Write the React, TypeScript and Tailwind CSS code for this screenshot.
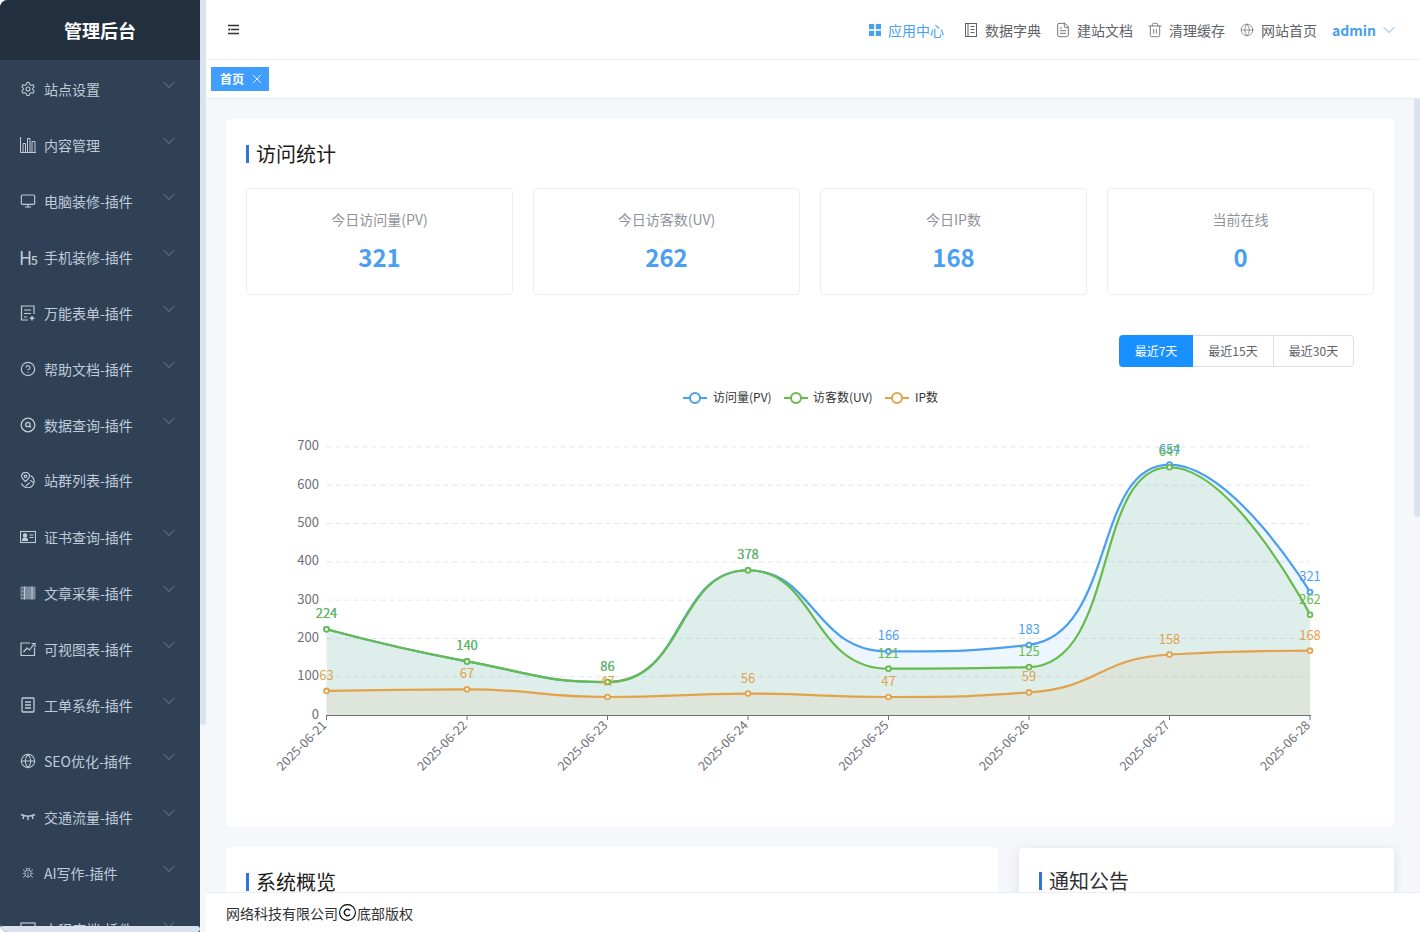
import React from "react";
import {
  Settings,
  Monitor,
  CircleHelp,
  ChevronDown,
  X,
  Copyright,
  Trash2,
  Globe,
  FileText,
  Bug,
} from "lucide-react";

type IconProps = { className?: string };

const BarsIcon = ({ className }: IconProps) => (
  <svg viewBox="0 0 16 16" fill="none" stroke="currentColor" strokeWidth="1" className={className}>
    <path d="M.5 0v15.500H16" />
    <path d="M3 15V6.500h2.500V15M7.500 15V1.500H10V15M12 15V4.500h3V15" />
  </svg>
);

const FormIcon = ({ className }: IconProps) => (
  <svg viewBox="0 0 16 16" fill="none" stroke="currentColor" strokeWidth="1.200" className={className}>
    <path d="M8 15H1.500V1h12.500v8" />
    <path d="M4 5h7M4 8.500h7M4 12h3" />
    <path d="M12 11v4.500M9.800 13.200h4.600" strokeWidth="1.500" />
  </svg>
);

const SearchCircleIcon = ({ className }: IconProps) => (
  <svg viewBox="0 0 16 16" fill="none" stroke="currentColor" strokeWidth="1.300" className={className}>
    <circle cx="8" cy="8" r="6.800" />
    <circle cx="7.800" cy="7.500" r="2.200" />
    <path d="M9.500 9.200l1.500 1.300" />
  </svg>
);

const PinGlobeIcon = ({ className }: IconProps) => (
  <svg viewBox="0 0 16 16" fill="none" stroke="currentColor" strokeWidth="1.200" className={className}>
    <path d="M5.500 9.500C3.500 7.500 1.500 6.200 1.500 4.300a4 4 0 0 1 8 0c0 1.900-2 3.200-4 5.200z" />
    <circle cx="5.500" cy="4.300" r="1.200" />
    <path d="M10.500 3.500a6.500 6.500 0 1 1-9 8" />
    <path d="M10 8.500c2 0 2 2 3.500 2M6 14.500c0-2.500 3-2 3.500-4" />
  </svg>
);

const IdCardIcon = ({ className }: IconProps) => (
  <svg viewBox="0 0 16 16" fill="none" stroke="currentColor" strokeWidth="1.100" className={className}>
    <rect x=".5" y="2.500" width="15" height="11" />
    <circle cx="5" cy="6.500" r="1.700" fill="currentColor" />
    <path d="M2.500 11.500c0-2 1-2.500 2.500-2.500s2.500.5 2.500 2.500z" fill="currentColor" />
    <path d="M9.500 6h4M9.500 8.500h4" />
  </svg>
);

const FilmIcon = ({ className }: IconProps) => (
  <svg viewBox="0 0 16 16" className={className}>
    <rect x=".5" y="1.500" width="15" height="13" rx="1" fill="currentColor" opacity=".55" />
    <path d="M4.500 1.500v13M12 1.500v13" stroke="currentColor" fill="none" />
    <path d="M1.500 4.500h2M1.500 8h2M1.500 11.500h2" stroke="#304156" fill="none" />
  </svg>
);

const ChartBoxIcon = ({ className }: IconProps) => (
  <svg viewBox="0 0 16 16" fill="none" stroke="currentColor" strokeWidth="1.200" className={className}>
    <path d="M14.500 6.500v8H1V2h9" />
    <path d="M3.500 11l3.500-4 2.500 2 4.500-6" />
    <path d="M11.500 2.500H15V6" />
  </svg>
);

const TicketIcon = ({ className }: IconProps) => (
  <svg viewBox="0 0 16 16" fill="none" stroke="currentColor" strokeWidth="1.300" className={className}>
    <rect x="2" y="1" width="12" height="14" rx="1" />
    <path d="M5 5h6M5 8h6M5 11h6" />
  </svg>
);

const EyeLashIcon = ({ className }: IconProps) => (
  <svg viewBox="0 0 16 16" fill="none" stroke="currentColor" strokeWidth="1.400" className={className}>
    <path d="M1 5.500c4 2 10 2 14 0" />
    <path d="M3.800 6.500L3 10M8 7.200V11M12.200 6.500l.8 3.500" />
  </svg>
);

const BoxIcon = ({ className }: IconProps) => (
  <svg viewBox="0 0 16 16" fill="none" stroke="currentColor" strokeWidth="1.200" className={className}>
    <rect x="1" y="2" width="14" height="12" />
  </svg>
);

const H5Icon = () => (
  <span className="w-4 -ml-px mr-px flex items-baseline text-[18px] leading-none tracking-[-1px]">
    H<span className="text-[12px] font-medium">5</span>
  </span>
);

const BookIcon = ({ className }: IconProps) => (
  <svg viewBox="0 0 14 14" fill="none" stroke="currentColor" strokeWidth="1" className={className}>
    <rect x="1.500" y=".5" width="11" height="13" />
    <path d="M4 .5v13M6.500 3.500h4M6.500 6.500h4M6.500 9.500h4" />
  </svg>
);

const GridIcon = ({ className }: IconProps) => (
  <svg viewBox="0 0 12 12" fill="currentColor" className={className}>
    <rect x="0" y="0" width="5.200" height="5.200" />
    <rect x="6.800" y="0" width="5.200" height="5.200" />
    <rect x="0" y="6.800" width="5.200" height="5.200" />
    <rect x="6.800" y="6.800" width="5.200" height="5.200" />
  </svg>
);

const FoldIcon = ({ className }: IconProps) => (
  <svg viewBox="0 0 11 11" fill="none" stroke="currentColor" strokeWidth="1.700" className={className}>
    <path d="M0 1.500h11M3 5.500h8M0 9.500h11" />
    <path d="M2 4.500L0 5.500l2 1z" fill="currentColor" strokeWidth=".5" />
  </svg>
);

const menuItems: { label: string; icon: React.ReactNode; arrow?: boolean; lift?: boolean }[] = [
  { label: "站点设置", icon: <Settings className="w-4 h-4" strokeWidth={1.6} /> },
  { label: "内容管理", icon: <BarsIcon className="w-4 h-4" /> },
  { label: "电脑装修-插件", icon: <Monitor className="w-4 h-4" strokeWidth={1.7} /> },
  { label: "手机装修-插件", icon: <H5Icon /> },
  { label: "万能表单-插件", icon: <FormIcon className="w-4 h-4" /> },
  { label: "帮助文档-插件", icon: <CircleHelp className="w-4 h-4" strokeWidth={1.7} /> },
  { label: "数据查询-插件", icon: <SearchCircleIcon className="w-4 h-4" /> },
  { label: "站群列表-插件", icon: <PinGlobeIcon className="w-4 h-4" />, arrow: false, lift: true },
  { label: "证书查询-插件", icon: <IdCardIcon className="w-4 h-4" /> },
  { label: "文章采集-插件", icon: <FilmIcon className="w-4 h-4" /> },
  { label: "可视图表-插件", icon: <ChartBoxIcon className="w-4 h-4" /> },
  { label: "工单系统-插件", icon: <TicketIcon className="w-4 h-4" /> },
  { label: "SEO优化-插件", icon: <Globe className="w-4 h-4" strokeWidth={1.6} /> },
  { label: "交通流量-插件", icon: <EyeLashIcon className="w-4 h-4" /> },
  { label: "AI写作-插件", icon: <Bug className="w-3 h-3 ml-0.5 mr-0.5" strokeWidth={1.4} /> },
  { label: "小程序端-插件", icon: <BoxIcon className="w-4 h-4" /> },
];

const navLinks: { label: string; icon: React.ReactNode; active?: boolean }[] = [
  { label: "应用中心", icon: <GridIcon className="w-3 h-3" />, active: true },
  { label: "数据字典", icon: <BookIcon className="w-[14px] h-[14px]" /> },
  { label: "建站文档", icon: <FileText className="w-4 h-4 shrink-0" strokeWidth={1.3} /> },
  { label: "清理缓存", icon: <Trash2 className="w-4 h-4 shrink-0" strokeWidth={1.2} /> },
  { label: "网站首页", icon: <Globe className="w-[14px] h-[14px]" strokeWidth={1.1} /> },
];

const stats = [
  { label: "今日访问量(PV)", value: 321 },
  { label: "今日访客数(UV)", value: 262 },
  { label: "今日IP数", value: 168 },
  { label: "当前在线", value: 0 },
];

const dates = ["2025-06-21", "2025-06-22", "2025-06-23", "2025-06-24", "2025-06-25", "2025-06-26", "2025-06-27", "2025-06-28"];

const series = [
  { name: "访问量(PV)", color: "#4a9ff0", data: [224, 140, 86, 378, 166, 183, 654, 321] },
  { name: "访客数(UV)", color: "#66bb4a", data: [224, 140, 86, 378, 121, 125, 647, 262] },
  { name: "IP数", color: "#e3a14a", data: [63, 67, 47, 56, 47, 59, 158, 168] },
];

const xAt = (i: number) => 326.5 + i * 140.5;
const yAt = (v: number) => 715 - v * 0.3829;
const clamp = (v: number, a: number, b: number) => Math.min(Math.max(v, Math.min(a, b)), Math.max(a, b));

// same smoothing as an echarts line with smooth: true
function smoothPath(pts: number[][]) {
  const smooth = 0.5;
  const n = pts.length;
  let d = `M${pts[0][0]} ${pts[0][1]}`;
  let cp0x = pts[0][0];
  let cp0y = pts[0][1];
  for (let i = 1; i < n; i++) {
    const [x, y] = pts[i];
    const [px, py] = pts[i - 1];
    let cp1x = x;
    let cp1y = y;
    let nextCp0x = x;
    let nextCp0y = y;
    if (i < n - 1) {
      const [nx, ny] = pts[i + 1];
      const lenPrev = Math.hypot(x - px, y - py);
      const lenNext = Math.hypot(nx - x, ny - y);
      const ratio = lenNext / (lenNext + lenPrev);
      nextCp0x = clamp(x + (nx - px) * smooth * ratio, x, nx);
      nextCp0y = clamp(y + (ny - py) * smooth * ratio, y, ny);
      cp1x = clamp(x - ((nextCp0x - x) * lenPrev) / lenNext, px, x);
      cp1y = clamp(y - ((nextCp0y - y) * lenPrev) / lenNext, py, y);
      nextCp0x = x + ((x - cp1x) * lenNext) / lenPrev;
      nextCp0y = y + ((y - cp1y) * lenNext) / lenPrev;
    }
    d += `C${cp0x} ${cp0y} ${cp1x} ${cp1y} ${x} ${y}`;
    cp0x = nextCp0x;
    cp0y = nextCp0y;
  }
  return d;
}

function VisitChart() {
  const ticks = [0, 100, 200, 300, 400, 500, 600, 700];
  const legend = [
    { x: 683, tx: 713 },
    { x: 784, tx: 813 },
    { x: 885, tx: 915 },
  ];
  return (
    <svg viewBox="246 367 1128 440" className="block w-full h-[440px]">
      {series.map((s, i) => (
        <g key={s.name}>
          <path d={`M${legend[i].x} 398h24`} stroke={s.color} strokeWidth="2" />
          <circle cx={legend[i].x + 12} cy="398" r="5" fill="#fff" stroke={s.color} strokeWidth="2" />
          <text x={legend[i].tx} y="402" fontSize="12" fill="#333">{s.name}</text>
        </g>
      ))}
      {ticks.map((t) => (
        <g key={t}>
          {t > 0 && <path d={`M326.500 ${yAt(t)}H1310`} stroke="#e0e6f1" strokeDasharray="5 4" />}
          <text x="319" y={yAt(t) + 3.500} textAnchor="end" fontSize="13" fill="#6e7079">{t}</text>
        </g>
      ))}
      {series.map((s) => {
        const pts = s.data.map((v, i) => [xAt(i), yAt(v)]);
        return (
          <path key={s.name} d={`${smoothPath(pts)}L1310 715L326.500 715Z`} fill={s.color} fillOpacity="0.1" />
        );
      })}
      <path d="M326 715.500H1311" stroke="#6e7079" />
      {dates.map((d, i) => (
        <g key={d}>
          <path d={`M${xAt(i)} 715v5`} stroke="#6e7079" />
          <text
            x={xAt(i) + 1}
            y="726"
            textAnchor="end"
            fontSize="12.500"
            fill="#6e7079"
            transform={`rotate(-45 ${xAt(i) + 1} 726)`}
          >
            {d}
          </text>
        </g>
      ))}
      {series.map((s) => {
        const pts = s.data.map((v, i) => [xAt(i), yAt(v)]);
        return (
          <g key={s.name}>
            <path d={smoothPath(pts)} fill="none" stroke={s.color} strokeWidth="2.200" />
            {pts.map(([x, y], i) => (
              <g key={i}>
                <circle cx={x} cy={y} r="2.400" fill="#fff" stroke={s.color} strokeWidth="1.800" />
                <text x={x} y={y - 11} textAnchor="middle" fontSize="13" fill={s.color}>{s.data[i]}</text>
              </g>
            ))}
          </g>
        );
      })}
    </svg>
  );
}

function SectionTitle({ text, className }: { text: string; className?: string }) {
  return (
    <div className={`flex items-center gap-[7px] h-[18px] text-[20px] ${className ?? ""}`}>
      <span className="w-[3px] h-[18px] bg-[#2f74d9]" />
      <span className="leading-[18px]">{text}</span>
    </div>
  );
}

function Sidebar() {
  return (
    <aside className="w-[206px] h-full flex shrink-0 bg-[#f5f7fa]">
      <div className="w-[200px] h-full flex flex-col relative overflow-hidden bg-[#304156]">
        <div className="h-[60px] shrink-0 flex items-center justify-center bg-[#222f3e] text-white text-[18px] font-bold">
          管理后台
        </div>
        <nav className="pt-px flex-1 overflow-hidden">
          {menuItems.map((item) => (
            <div key={item.label} className="h-14 pl-5 pr-[21px] flex items-center text-[#bfcbd9] text-sm">
              <div className={`flex items-center gap-2 ${item.lift ? "-translate-y-px" : ""}`}>
                {item.icon}
                <span>{item.label}</span>
              </div>
              {item.arrow !== false && (
                <ChevronDown className="w-5 h-5 ml-auto -mt-2 text-[#8a97a8]" strokeWidth={0.9} />
              )}
            </div>
          ))}
        </nav>
        <div className="absolute left-0 right-0 bottom-0 h-1.5 bg-[#dbe3ef] rounded" />
      </div>
      <div className="w-1.5 h-[725px] bg-[#dbe3ef] rounded-b" />
    </aside>
  );
}

export default function App() {
  return (
    <div className="w-[1420px] h-[932px] flex overflow-hidden rounded-lg bg-white text-[#303133] font-['Noto_Sans_CJK_SC','Noto_Sans',sans-serif]">
      <Sidebar />
      <main className="flex-1 min-w-0 flex flex-col">
        <header className="h-[60px] shrink-0 flex items-center pl-[22px] pr-[21px] border-b border-[#ebeef5]">
          <FoldIcon className="w-[11px] h-[11px] text-[#303133]" />
          <div className="ml-auto flex items-center gap-[15px] text-sm text-[#606266]">
            {navLinks.map((link) => (
              <div
                key={link.label}
                className={link.active ? "flex items-center gap-1.5 mr-[5px] text-[#4a9ff0]" : "flex items-center gap-[7px]"}
              >
                <span className="w-[14px] flex justify-center">{link.icon}</span>
                <span>{link.label}</span>
              </div>
            ))}
            <div className="flex items-center gap-[3px] text-[#4a9ff0]">
              <span className="font-bold">admin</span>
              <ChevronDown className="w-5 h-5" strokeWidth={1} />
            </div>
          </div>
        </header>

        <div className="h-[39px] shrink-0 pl-[5px] pt-[7px] border-b border-[#e6e9ef]">
          <div className="w-[58px] h-6 flex items-center gap-1.5 pl-[9px] bg-[#409eff] text-white text-xs font-bold">
            <span>首页</span>
            <X className="w-3.5 h-3.5" strokeWidth={1.5} />
          </div>
        </div>

        <div className="flex-1 min-h-0 flex bg-[#f5f7fa]">
          <div className="flex-1 min-w-0 overflow-hidden p-5">
            <section className="h-[708px] p-5 bg-white rounded">
              <SectionTitle text="访问统计" className="mt-1.5 mb-[25px] text-[#1a1a1a]" />
              <div className="grid grid-cols-4 gap-5">
                {stats.map((s) => (
                  <div key={s.label} className="h-[107px] flex flex-col items-center border border-[#ebeef5] rounded pt-5">
                    <span className="text-sm leading-5 text-[#909399]">{s.label}</span>
                    <span className="mt-3 text-2xl leading-8 font-bold text-[#4a9ff0]">{s.value}</span>
                  </div>
                ))}
              </div>
              <div className="mt-10 pr-5 flex justify-end text-xs">
                <div className="w-[74px] h-8 flex items-center justify-center bg-[#1890ff] text-white rounded-l">最近7天</div>
                <div className="w-20 h-8 flex items-center justify-center border-y border-[#dcdfe6] text-[#606266]">最近15天</div>
                <div className="w-[81px] h-8 flex items-center justify-center border border-[#dcdfe6] rounded-r text-[#606266]">最近30天</div>
              </div>
              <VisitChart />
            </section>
            <div className="mt-5 flex gap-[21px]">
              <section className="w-[772px] h-[200px] shrink-0 p-5 pt-[26px] bg-white rounded">
                <SectionTitle text="系统概览" className="text-[#1a1a1a]" />
              </section>
              <section className="flex-1 h-[200px] mt-px p-5 pt-6 bg-white rounded shadow-[0_2px_12px_rgba(0,0,0,0.1)]">
                <SectionTitle text="通知公告" className="text-[#303133]" />
              </section>
            </div>
          </div>
          <div className="w-1.5 h-[418px] bg-[#dbe3ef] rounded-b" />
        </div>

        <footer className="h-10 shrink-0 flex items-center pl-5 bg-white border-t border-[#ebeef5] text-sm text-[#303133]">
          网络科技有限公司
          <Copyright className="w-[19px] h-[19px] text-black" strokeWidth={1.4} />
          底部版权
        </footer>
      </main>
    </div>
  );
}
